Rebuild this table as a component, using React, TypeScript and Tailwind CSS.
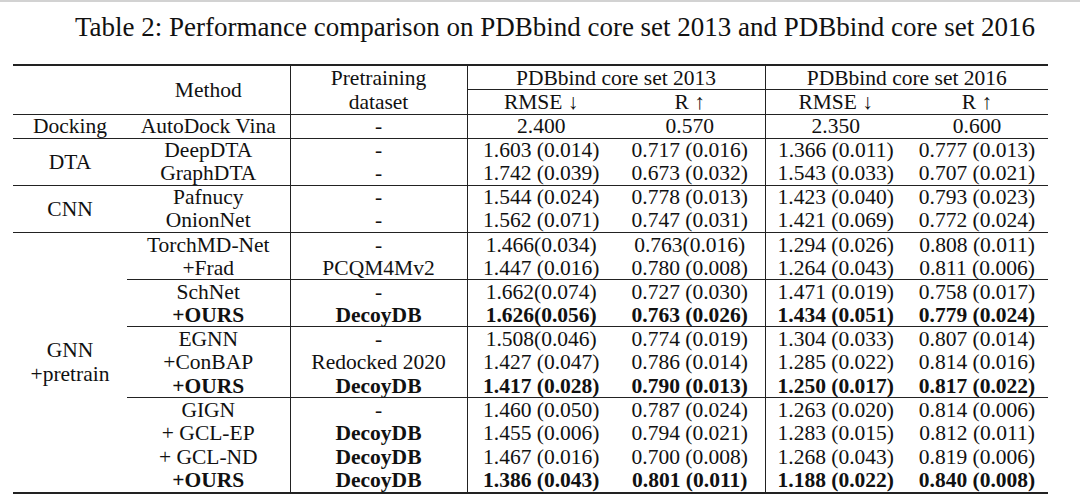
import React from "react";

type Row = {
  m: string;
  p: string;
  v: [string, string, string, string];
  bold?: boolean;
  pBold?: boolean;
};

const L = "border-[#222]";

function Cell({
  children,
  className = "",
  rowSpan,
  colSpan,
}: {
  children?: React.ReactNode;
  className?: string;
  rowSpan?: number;
  colSpan?: number;
}) {
  return (
    <td
      rowSpan={rowSpan}
      colSpan={colSpan}
      className={`p-0 text-center align-middle whitespace-nowrap ${className}`}
    >
      {children}
    </td>
  );
}

function DataRow({ r, top, first }: { r: Row; top?: boolean; first?: React.ReactNode }) {
  const t = top ? `border-t ${L}` : "";
  const b = r.bold ? "font-bold" : "";
  return (
    <tr className="h-[23.6px]">
      {first}
      <Cell className={`${t} ${b}`}>{r.m}</Cell>
      <Cell className={`${t} border-l border-r ${L} ${r.bold || r.pBold ? "font-bold" : ""}`}>{r.p}</Cell>
      <Cell className={`${t} ${b}`}>{r.v[0]}</Cell>
      <Cell className={`${t} border-r ${L} ${b}`}>{r.v[1]}</Cell>
      <Cell className={`${t} ${b}`}>{r.v[2]}</Cell>
      <Cell className={`${t} ${b}`}>{r.v[3]}</Cell>
    </tr>
  );
}

const dta: Row[] = [
  { m: "DeepDTA", p: "-", v: ["1.603 (0.014)", "0.717 (0.016)", "1.366 (0.011)", "0.777 (0.013)"] },
  { m: "GraphDTA", p: "-", v: ["1.742 (0.039)", "0.673 (0.032)", "1.543 (0.033)", "0.707 (0.021)"] },
];
const cnn: Row[] = [
  { m: "Pafnucy", p: "-", v: ["1.544 (0.024)", "0.778 (0.013)", "1.423 (0.040)", "0.793 (0.023)"] },
  { m: "OnionNet", p: "-", v: ["1.562 (0.071)", "0.747 (0.031)", "1.421 (0.069)", "0.772 (0.024)"] },
];
const gnn: Row[][] = [
  [
    { m: "TorchMD-Net", p: "-", v: ["1.466(0.034)", "0.763(0.016)", "1.294 (0.026)", "0.808 (0.011)"] },
    { m: "+Frad", p: "PCQM4Mv2", v: ["1.447 (0.016)", "0.780 (0.008)", "1.264 (0.043)", "0.811 (0.006)"] },
  ],
  [
    { m: "SchNet", p: "-", v: ["1.662(0.074)", "0.727 (0.030)", "1.471 (0.019)", "0.758 (0.017)"] },
    { m: "+OURS", p: "DecoyDB", v: ["1.626(0.056)", "0.763 (0.026)", "1.434 (0.051)", "0.779 (0.024)"], bold: true },
  ],
  [
    { m: "EGNN", p: "-", v: ["1.508(0.046)", "0.774 (0.019)", "1.304 (0.033)", "0.807 (0.014)"] },
    { m: "+ConBAP", p: "Redocked 2020", v: ["1.427 (0.047)", "0.786 (0.014)", "1.285 (0.022)", "0.814 (0.016)"] },
    { m: "+OURS", p: "DecoyDB", v: ["1.417 (0.028)", "0.790 (0.013)", "1.250 (0.017)", "0.817 (0.022)"], bold: true },
  ],
  [
    { m: "GIGN", p: "-", v: ["1.460 (0.050)", "0.787 (0.024)", "1.263 (0.020)", "0.814 (0.006)"] },
    { m: "+ GCL-EP", p: "DecoyDB", pBold: true, v: ["1.455 (0.006)", "0.794 (0.021)", "1.283 (0.015)", "0.812 (0.011)"] },
    { m: "+ GCL-ND", p: "DecoyDB", pBold: true, v: ["1.467 (0.016)", "0.700 (0.008)", "1.268 (0.043)", "0.819 (0.006)"] },
    { m: "+OURS", p: "DecoyDB", v: ["1.386 (0.043)", "0.801 (0.011)", "1.188 (0.022)", "0.840 (0.008)"], bold: true },
  ],
];

export default function App() {
  return (
    <div className="w-[1080px] h-[502px] bg-white text-[#111] font-['Liberation_Serif','Times_New_Roman',serif] overflow-hidden">
      <div className="h-[2px] bg-[#d2d2d2]" />
      <div className="pt-[9px] h-[62px] text-[27px] leading-[32px] text-center pl-[30px]">
        Table 2: Performance comparison on PDBbind core set 2013 and PDBbind core set 2016
      </div>
      <div className={`ml-[13px] w-[1035px] border-t-2 border-b-2 ${L}`}>
        <table className="w-[1035px] table-fixed border-collapse text-[21.5px] leading-[22px]">
          <colgroup>
            <col className="w-[114px]" />
            <col className="w-[163px]" />
            <col className="w-[177px]" />
            <col className="w-[148px]" />
            <col className="w-[150px]" />
            <col className="w-[141px]" />
            <col className="w-[142px]" />
          </colgroup>
          <tbody>
            <tr className="h-[23px]">
              <Cell rowSpan={2} className={`border-b ${L}`}></Cell>
              <Cell rowSpan={2} className={`border-b ${L}`}>Method</Cell>
              <Cell rowSpan={2} className={`border-b border-l border-r ${L} leading-[24px]`}>
                <div>Pretraining</div>
                <div>dataset</div>
              </Cell>
              <Cell colSpan={2} className={`border-b border-r ${L}`}>PDBbind core set 2013</Cell>
              <Cell colSpan={2} className={`border-b ${L}`}>PDBbind core set 2016</Cell>
            </tr>
            <tr className="h-[24px]">
              <Cell className={`border-b ${L}`}>RMSE ↓</Cell>
              <Cell className={`border-b border-r ${L}`}>R ↑</Cell>
              <Cell className={`border-b ${L}`}>RMSE ↓</Cell>
              <Cell className={`border-b ${L}`}>R ↑</Cell>
            </tr>
            <DataRow
              r={{ m: "AutoDock Vina", p: "-", v: ["2.400", "0.570", "2.350", "0.600"] }}
              first={<Cell>Docking</Cell>}
            />
            {dta.map((r, i) => (
              <DataRow
                key={"d" + i}
                r={r}
                top={i === 0}
                first={i === 0 ? <Cell rowSpan={2} className={`border-t ${L}`}>DTA</Cell> : undefined}
              />
            ))}
            {cnn.map((r, i) => (
              <DataRow
                key={"c" + i}
                r={r}
                top={i === 0}
                first={i === 0 ? <Cell rowSpan={2} className={`border-t ${L}`}>CNN</Cell> : undefined}
              />
            ))}
            {gnn.map((g, gi) =>
              g.map((r, i) => (
                <DataRow
                  key={`g${gi}-${i}`}
                  r={r}
                  top={i === 0}
                  first={
                    gi === 0 && i === 0 ? (
                      <Cell rowSpan={11} className={`border-t ${L} leading-[24px]`}>
                        <div>GNN</div>
                        <div>+pretrain</div>
                      </Cell>
                    ) : undefined
                  }
                />
              ))
            )}
          </tbody>
        </table>
      </div>
    </div>
  );
}
